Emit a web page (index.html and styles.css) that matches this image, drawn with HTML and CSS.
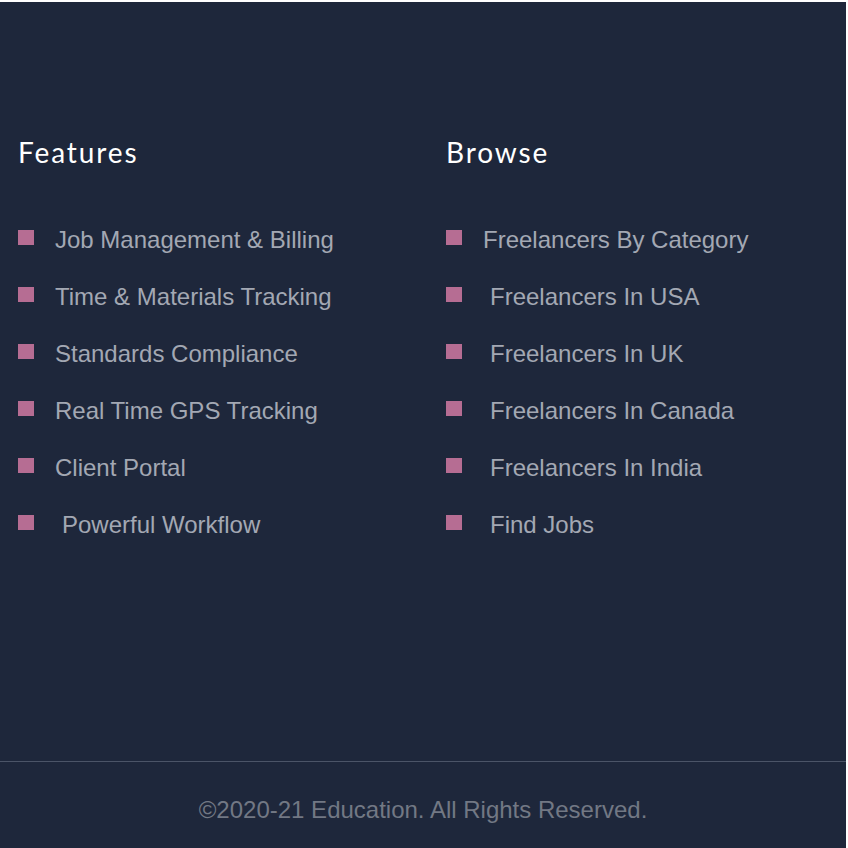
FILE: index.html
```html
<!DOCTYPE html>
<html lang="en">
<head>
<meta charset="utf-8">
<title>Footer</title>
<link rel="stylesheet" href="styles.css">
</head>
<body>
<footer class="site-footer">
  <div class="footer-columns">
    <div class="footer-col">
      <h3 class="footer-title">Features</h3>
      <ul class="footer-list">
        <li class="footer-item"><span class="bullet"></span><span class="item-text">Job Management &amp; Billing</span></li>
        <li class="footer-item"><span class="bullet"></span><span class="item-text">Time &amp; Materials Tracking</span></li>
        <li class="footer-item"><span class="bullet"></span><span class="item-text">Standards Compliance</span></li>
        <li class="footer-item"><span class="bullet"></span><span class="item-text">Real Time GPS Tracking</span></li>
        <li class="footer-item"><span class="bullet"></span><span class="item-text">Client Portal</span></li>
        <li class="footer-item"><span class="bullet"></span><span class="item-text indent">Powerful Workflow</span></li>
      </ul>
    </div>
    <div class="footer-col">
      <h3 class="footer-title">Browse</h3>
      <ul class="footer-list">
        <li class="footer-item"><span class="bullet"></span><span class="item-text">Freelancers By Category</span></li>
        <li class="footer-item"><span class="bullet"></span><span class="item-text indent">Freelancers In USA</span></li>
        <li class="footer-item"><span class="bullet"></span><span class="item-text indent">Freelancers In UK</span></li>
        <li class="footer-item"><span class="bullet"></span><span class="item-text indent">Freelancers In Canada</span></li>
        <li class="footer-item"><span class="bullet"></span><span class="item-text indent">Freelancers In India</span></li>
        <li class="footer-item"><span class="bullet"></span><span class="item-text indent">Find Jobs</span></li>
      </ul>
    </div>
  </div>
  <div class="footer-bottom">
    <p class="copyright">&copy;2020-21 Education. All Rights Reserved.</p>
  </div>
</footer>
</body>
</html>
```

FILE: styles.css
```css
html, body {
  margin: 0;
  padding: 0;
  background: #ffffff;
}

body {
  height: 848px;
  overflow: hidden;
}

.site-footer {
  margin: 2px 2px 0 0;
  height: 846px;
  background: #1e273b;
  display: flex;
  flex-direction: column;
}

.footer-columns {
  display: grid;
  grid-template-columns: 428px 1fr;
  padding: 133px 0 0 18px;
  height: 759px;
  flex: none;
  box-sizing: border-box;
}

.footer-title {
  margin: 0 0 42px;
  font-family: "Lato", "Open Sans", sans-serif;
  font-weight: 400;
  font-size: 28px;
  letter-spacing: 1.9px;
  line-height: 34px;
  color: #ffffff;
}

.footer-list {
  list-style: none;
  margin: 0;
  padding: 0;
}

.footer-item {
  display: flex;
  align-items: center;
  height: 57px;
}

.bullet {
  flex: none;
  width: 16px;
  height: 15px;
  background: #b66d93;
  margin-top: -4px;
}

.item-text {
  margin-left: 21px;
  font-family: "Liberation Sans", Arial, sans-serif;
  font-size: 24px;
  color: #a3a8b3;
}

.item-text.indent {
  margin-left: 28px;
}

.footer-bottom {
  border-top: 1px solid #4b5467;
  flex: 1;
  display: flex;
  justify-content: center;
  padding-top: 34px;
  box-sizing: border-box;
}

.copyright {
  margin: 0;
  font-family: "Liberation Sans", Arial, sans-serif;
  font-size: 24px;
  color: #727884;
}
```
